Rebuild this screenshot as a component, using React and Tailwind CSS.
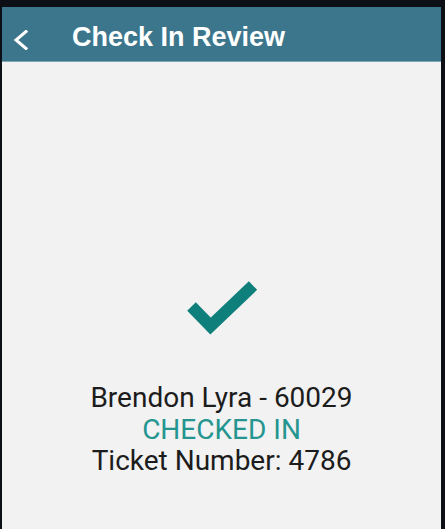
import React from "react";

export default function App() {
  return (
    <div className="w-[445px] h-[529px] bg-[#0c0f16] pt-[7px] pl-[2px] pr-[4px] overflow-hidden">
      <div className="h-full bg-[#f2f2f2] flex flex-col">
        <div className="h-[55px] bg-[#3c768c] border-b border-[#7fa5b5] flex items-center relative shrink-0">
          <svg
            className="absolute left-[10px] top-[23px]"
            width="17"
            height="20"
            viewBox="0 0 17 20"
          >
            <polyline
              points="14,1.5 4,10 14,18.5"
              fill="none"
              stroke="#ffffff"
              strokeWidth="3"
              strokeLinecap="square"
              strokeLinejoin="miter"
            />
          </svg>
          <div
            className="ml-[70px] mt-[6px] text-white font-bold text-[27px] leading-none"
            style={{ fontFamily: '"Liberation Sans", Arial, sans-serif' }}
          >
            Check In Review
          </div>
        </div>
        <div className="flex flex-col items-center pt-[217px]">
          <svg width="76" height="60" viewBox="0 0 76 60">
            <polyline
              points="7.5,27.5 26.5,47 69,6.5"
              fill="none"
              stroke="#0f7f7b"
              strokeWidth="12"
              strokeLinecap="butt"
              strokeLinejoin="miter"
            />
          </svg>
          <div
            className="mt-[43px] flex flex-col items-center text-[28px] leading-[31.5px]"
            style={{ fontFamily: 'Roboto, "Noto Sans", sans-serif' }}
          >
            <div className="text-[#1c1c1c]">Brendon Lyra - 60029</div>
            <div className="text-[#24958f]">CHECKED IN</div>
            <div className="text-[#1c1c1c]">Ticket Number: 4786</div>
          </div>
        </div>
      </div>
    </div>
  );
}
